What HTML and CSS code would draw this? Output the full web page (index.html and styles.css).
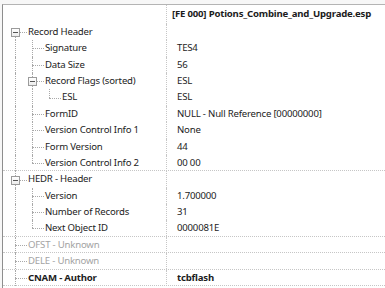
FILE: index.html
```html
<!doctype html>
<html lang="en">
<head>
    <meta charset="UTF-8" />
    <title>Record View</title>
    <link rel="stylesheet" href="styles.css">
</head>
<body>
    <div class="tree">
        <div class="row head">
            <div class="name"></div>
            <div class="value">[FE 000] Potions_Combine_and_Upgrade.esp</div>
        </div>

        <div class="row">
            <div class="name"><span class="g f"><i class="box"></i></span><span class="label">Record Header</span></div>
            <div class="value"></div>
        </div>
        <div class="row">
            <div class="name"><span class="g v"></span><span class="g t"></span><span class="label">Signature</span></div>
            <div class="value">TES4</div>
        </div>
        <div class="row">
            <div class="name"><span class="g v"></span><span class="g t"></span><span class="label">Data Size</span></div>
            <div class="value">56</div>
        </div>
        <div class="row">
            <div class="name"><span class="g v"></span><span class="g f t"><i class="box"></i></span><span class="label">Record Flags (sorted)</span></div>
            <div class="value">ESL</div>
        </div>
        <div class="row">
            <div class="name"><span class="g v"></span><span class="g v"></span><span class="g l"></span><span class="label">ESL</span></div>
            <div class="value">ESL</div>
        </div>
        <div class="row">
            <div class="name"><span class="g v"></span><span class="g t"></span><span class="label">FormID</span></div>
            <div class="value">NULL - Null Reference [00000000]</div>
        </div>
        <div class="row">
            <div class="name"><span class="g v"></span><span class="g t"></span><span class="label">Version Control Info 1</span></div>
            <div class="value">None</div>
        </div>
        <div class="row">
            <div class="name"><span class="g v"></span><span class="g t"></span><span class="label">Form Version</span></div>
            <div class="value">44</div>
        </div>
        <div class="row end">
            <div class="name"><span class="g v"></span><span class="g l"></span><span class="label">Version Control Info 2</span></div>
            <div class="value">00 00</div>
        </div>

        <div class="row">
            <div class="name"><span class="g t"><i class="box"></i></span><span class="label">HEDR - Header</span></div>
            <div class="value"></div>
        </div>
        <div class="row">
            <div class="name"><span class="g v"></span><span class="g t"></span><span class="label">Version</span></div>
            <div class="value">1.700000</div>
        </div>
        <div class="row">
            <div class="name"><span class="g v"></span><span class="g t"></span><span class="label">Number of Records</span></div>
            <div class="value">31</div>
        </div>
        <div class="row end">
            <div class="name"><span class="g v"></span><span class="g l"></span><span class="label">Next Object ID</span></div>
            <div class="value">0000081E</div>
        </div>

        <div class="row end muted">
            <div class="name"><span class="g t"></span><span class="label">OFST - Unknown</span></div>
            <div class="value"></div>
        </div>
        <div class="row end muted">
            <div class="name"><span class="g t"></span><span class="label">DELE - Unknown</span></div>
            <div class="value"></div>
        </div>
        <div class="row end bold">
            <div class="name"><span class="g t"></span><span class="label">CNAM - Author</span></div>
            <div class="value">tcbflash</div>
        </div>
    </div>
</body>
</html>
```

FILE: styles.css
```css
* {
    box-sizing: border-box;
}
body {
    margin: 0;
    background: #f7f7f7;
    font-family: "Noto Sans", sans-serif;
    font-size: 9.6px;
    letter-spacing: -0.2px;
    color: #1c1c1c;
}
.tree {
    margin: 4px 0 0 2px;
    height: 284px;
    overflow: hidden;
    background: #fff;
    border-top: 1px solid #b4b4b4;
    border-left: 1px solid #8e8e8e;
}
.row {
    display: grid;
    grid-template-columns: 164px 1fr;
    height: 16.4px;
    line-height: 16px;
    white-space: nowrap;
}
.row.head {
    height: 18.8px;
    line-height: 18px;
    font-weight: bold;
}
.row.end {
    border-bottom: 1px dotted #c6c6c6;
}
.row.muted {
    color: #a3a3a3;
}
.row.bold {
    font-weight: bold;
}
.name {
    display: flex;
    padding-left: 4px;
    border-right: 1px dotted #c6c6c6;
}
.label {
    margin-left: 4px;
}
.value {
    padding-left: 10px;
}
.head .value {
    padding-left: 5px;
}

/* tree guide cells */
.g {
    position: relative;
    flex: none;
    width: 17px;
}
.g::before,
.g::after {
    position: absolute;
    left: 8px;
}
.v::before,
.t::before {
    content: "";
    top: 0;
    bottom: 0;
    border-left: 1px dotted #a9a9a9;
}
.l::before {
    content: "";
    top: 0;
    height: 50%;
    border-left: 1px dotted #a9a9a9;
}
.f::before {
    content: "";
    top: 50%;
    bottom: 0;
    border-left: 1px dotted #a9a9a9;
}
.f.t::before {
    top: 0;
}
.t::after,
.l::after,
.f::after {
    content: "";
    top: 50%;
    right: -3px;
    border-top: 1px dotted #a9a9a9;
}
.box {
    position: absolute;
    z-index: 1;
    left: 4px;
    top: calc(50% - 4px);
    width: 9px;
    height: 9px;
    border: 1px solid #9b9b9b;
    background: linear-gradient(to bottom, #fff, #ececec);
}
.box::after {
    content: "";
    position: absolute;
    left: 1px;
    right: 1px;
    top: 3px;
    height: 1px;
    background: #555;
}
```
